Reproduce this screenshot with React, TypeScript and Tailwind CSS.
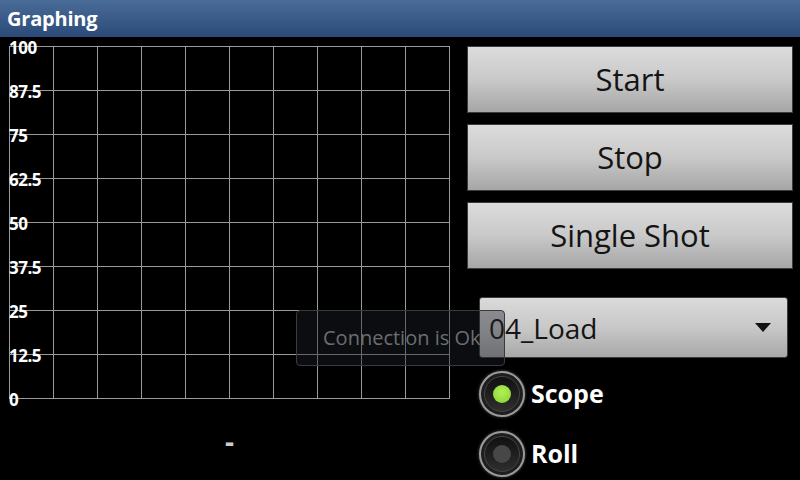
import React from "react";

const labels = ["100", "87.5", "75", "62.5", "50", "37.5", "25", "12.5", "0"];

function Grid() {
  const lines = [];
  for (let i = 0; i <= 10; i++) {
    lines.push(<line key={"v" + i} x1={i * 44 + 0.5} y1={0} x2={i * 44 + 0.5} y2={353} stroke="#9a9a9a" strokeWidth={1} />);
  }
  for (let j = 0; j <= 8; j++) {
    lines.push(<line key={"h" + j} x1={0} y1={j * 44 + 0.5} x2={441} y2={j * 44 + 0.5} stroke="#9a9a9a" strokeWidth={1} />);
  }
  return (
    <svg width={441} height={353} className="block">
      {lines}
    </svg>
  );
}

function GrayButton({ label }: { label: string }) {
  return (
    <button className="w-[326px] h-[67px] border border-[#3c3c3c] bg-gradient-to-b from-[#dcdcdc] via-[#c9c9c9] to-[#a6a6a6] text-[31px] text-[#141414] flex items-center justify-center">
      {label}
    </button>
  );
}

function Radio({ label, checked }: { label: string; checked?: boolean }) {
  return (
    <div className="flex items-center gap-[6px] h-[44px]">
      <div className="w-[46px] h-[46px] rounded-full border-2 border-[#9a9a9a] bg-[#1e1e1e] shadow-[0_0_3px_rgba(255,255,255,0.35)] flex items-center justify-center">
        <div className="w-[36px] h-[36px] rounded-full bg-gradient-to-b from-[#111] to-[#2e2e2e] border border-[#444] flex items-center justify-center">
          {checked ? (
            <div className="w-[18px] h-[18px] rounded-full bg-[radial-gradient(circle_at_50%_40%,#b2ef5a,#86d22a)]" />
          ) : (
            <div className="w-[18px] h-[18px] rounded-full bg-[#474747]" />
          )}
        </div>
      </div>
      <span className="text-[25px] font-bold text-white">{label}</span>
    </div>
  );
}

export default function App() {
  return (
    <div className="relative w-[800px] h-[480px] bg-black overflow-hidden" style={{ fontFamily: '"Open Sans", "Noto Sans", sans-serif' }}>
      {/* Title bar */}
      <div className="h-[38px] bg-gradient-to-b from-[#4a6c98] to-[#2b4a77] border-b border-black flex items-center px-[7px]">
        <span className="text-[20px] font-bold text-white leading-none tracking-[-0.2px]">Graphing</span>
      </div>

      <div className="flex">
        {/* Graph */}
        <div className="w-[460px] flex flex-col">
          <div className="relative ml-[9px] mt-[8px] w-[441px] h-[353px]">
            <Grid />
            {labels.map((l, j) => (
              <span
                key={l}
                className="absolute left-[0px] -translate-y-1/2 text-[17px] font-bold text-white leading-none tracking-[-0.5px]"
                style={{ top: j * 44 + 1 }}
              >
                {l}
              </span>
            ))}
          </div>
          <div className="mt-[28px] ml-[9px] w-[441px] text-center text-[28px] font-bold text-[#cccccc] leading-none">-</div>
        </div>

        {/* Controls */}
        <div className="flex-1 flex flex-col pt-[8px]">
          <div className="ml-[7px] flex flex-col gap-[11px]">
            <GrayButton label="Start" />
            <GrayButton label="Stop" />
            <GrayButton label="Single Shot" />
          </div>

          <div className="ml-[19px] mt-[28px] w-[309px] h-[61px] rounded-[3px] border border-[#3c3c3c] bg-gradient-to-b from-[#dadada] via-[#c8c8c8] to-[#a8a8a8] flex items-center justify-between pl-[9px] pr-[16px]">
            <span className="text-[28px] text-[#141414]">04_Load</span>
            <svg width="16" height="9" viewBox="0 0 16 9">
              <path d="M0 0 H16 L8 9 Z" fill="#111" />
            </svg>
          </div>

          <div className="ml-[19px] mt-[14px] flex flex-col gap-[16px]">
            <Radio label="Scope" checked />
            <Radio label="Roll" />
          </div>
        </div>
      </div>

      {/* Toast */}
      <div className="absolute left-[296px] top-[310px] w-[209px] h-[56px] rounded-[4px] border border-[#3a3a3a] bg-[rgba(28,32,40,0.4)] flex items-center pl-[26px] overflow-hidden">
        <span className="text-[20px] text-[#6a6e72] whitespace-nowrap">Connection is Ok</span>
      </div>
    </div>
  );
}
